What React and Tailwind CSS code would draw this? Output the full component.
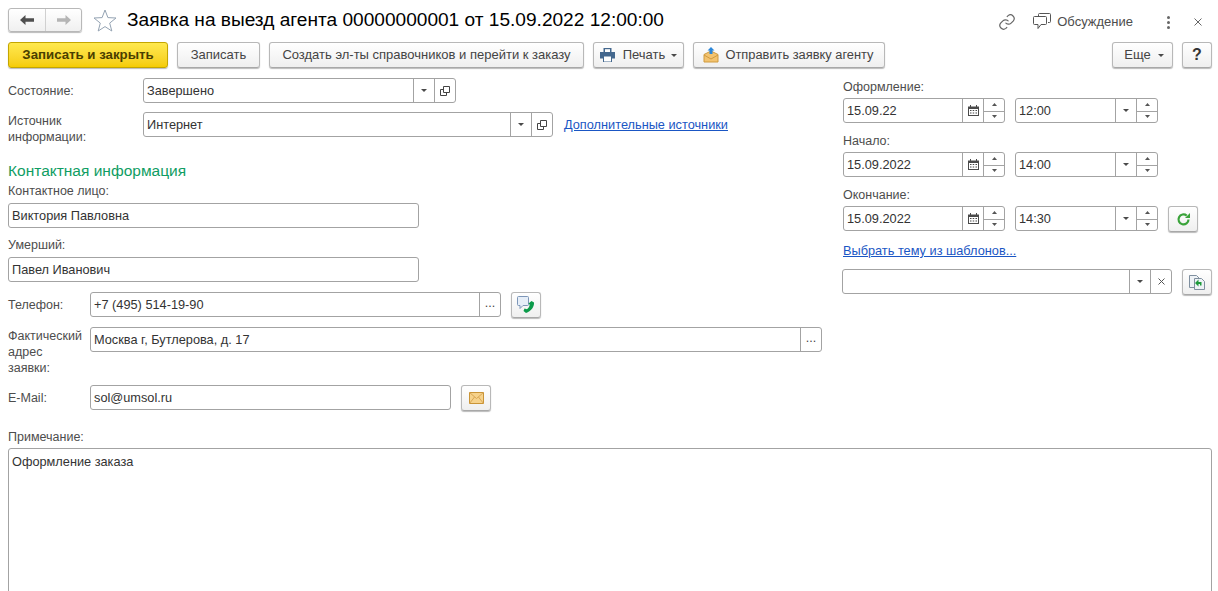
import React from "react";

const Caret = ({ className = "" }) => (
  <svg width="6" height="3" viewBox="0 0 6 3" className={className}>
    <path d="M0 0h6L3 3z" fill="#4a4a4a" />
  </svg>
);

const Calendar = () => (
  <svg width="11" height="11" viewBox="0 0 11 11">
    <path d="M0 1.500h11V11H0z" fill="#4a4a4a" />
    <path d="M2 0h1v2H2zM8 0h1v2H8z" fill="#4a4a4a" />
    <path d="M1 4h9v6H1z" fill="#fff" />
    <path d="M2 5h1.500v1H2zM4.700 5h1.500v1H4.700zM7.500 5H9v1H7.500zM2 7.500h1.500v1H2zM4.700 7.500h1.500v1H4.700zM7.500 7.500H9v1H7.500z" fill="#4a4a4a" />
  </svg>
);

const OpenIcon = () => (
  <svg width="10" height="10" viewBox="0 0 10 10" fill="none" stroke="#444" strokeWidth="1">
    <path d="M3.500 .5h6v6h-6z" />
    <path d="M3.500 3.500H.5v6h6V7" />
  </svg>
);

// маленькая кнопка справа в поле ввода
const Cell = ({ children }) => (
  <div className="w-[21px] shrink-0 h-full border-l border-[#a3a3a3] flex items-center justify-center">
    {children}
  </div>
);

const Spin = () => (
  <div className="w-[21px] shrink-0 h-full border-l border-[#a3a3a3] flex flex-col">
    <div className="h-1/2 flex items-center justify-center">
      <svg width="5" height="3" viewBox="0 0 5 3"><path d="M0 3h5L2.500 0z" fill="#555" /></svg>
    </div>
    <div className="h-1/2 border-t border-[#a3a3a3] flex items-center justify-center">
      <svg width="5" height="3" viewBox="0 0 5 3"><path d="M0 0h5L2.500 3z" fill="#555" /></svg>
    </div>
  </div>
);

const Field = ({ value, className = "", children }) => (
  <div className={`h-[25px] flex items-stretch border border-[#a3a3a3] rounded-[3px] bg-white ${className}`}>
    <div className="flex-1 min-w-0 pl-[3px] leading-[23px] text-[12.75px] text-[#333]">{value}</div>
    {children}
  </div>
);

const Btn = ({ children, className = "" }) => (
  <button className={`h-[26px] shrink-0 flex items-center justify-center border border-[#b8b8b8] border-b-[#a8a8a8] rounded-[3px] bg-gradient-to-b from-white to-[#efefef] shadow-[0_1px_1px_#bbb] text-[13px] text-[#444] ${className}`}>
    {children}
  </button>
);

const IconBtn = ({ children }) => <Btn className="w-[30px]">{children}</Btn>;

const Label = ({ children, className = "" }) => (
  <div className={`text-[#4d4d4d] leading-[16px] ${className}`}>{children}</div>
);

const DateRow = ({ date, time, children }) => (
  <div className="flex gap-[10px] h-[25px]">
    <Field value={date} className="w-[162px]">
      <Cell><Calendar /></Cell>
      <Spin />
    </Field>
    <Field value={time} className="w-[143px]">
      <Cell><Caret /></Cell>
      <Spin />
    </Field>
    {children}
  </div>
);

export default function App() {
  return (
    <div className="w-[1218px] h-[591px] overflow-hidden bg-white text-[12.5px] font-['Liberation_Sans',Arial,sans-serif]">
      {/* Заголовок */}
      <div className="h-[42px] pt-[8px] pl-[8px] pr-[16px] flex items-start">
        <div className="w-[74px] h-[24px] flex border border-[#b8b8b8] rounded-[3px] bg-gradient-to-b from-white to-[#f0f0f0] shadow-[0_1px_1px_#bbb]">
          <div className="w-[37px] flex items-center justify-center border-r border-[#d0d0d0]">
            <svg width="14" height="10" viewBox="0 0 14 10"><path d="M0 5 5.500 0v3.300H14v3.400H5.500V10z" fill="#4f4f4f" /></svg>
          </div>
          <div className="flex-1 flex items-center justify-center">
            <svg width="14" height="10" viewBox="0 0 14 10"><path d="M14 5 8.500 0v3.300H0v3.400h8.500V10z" fill="#b5b5b5" /></svg>
          </div>
        </div>
        <svg width="24" height="23" viewBox="0 0 24 23" className="ml-[11px] mt-[1px]">
          <path d="M12 1l2.900 7.600 8.100.4-6.300 5.100 2.100 7.900L12 17.600l-6.800 4.400 2.100-7.900L1 9l8.100-.4z" fill="#fff" stroke="#94a3b3" strokeWidth="1" />
        </svg>
        <div className="ml-[10px] text-[19.1px] leading-[24px] text-black">Заявка на выезд агента 00000000001 от 15.09.2022 12:00:00</div>
        <div className="flex-1" />
        <svg width="18" height="18" viewBox="0 0 24 24" fill="none" stroke="#666" strokeWidth="1.600" className="mt-[5px]">
          <path d="M10 13a5 5 0 0 0 7.500.5l3-3a5 5 0 0 0-7-7l-1.700 1.700" />
          <path d="M14 11a5 5 0 0 0-7.500-.5l-3 3a5 5 0 0 0 7 7l1.700-1.700" />
        </svg>
        <svg width="18" height="17" viewBox="0 0 18 17" fill="none" stroke="#555" strokeWidth="1" className="ml-[17px] mt-[5px]">
          <path d="M5.500 3.500v-2a1 1 0 0 1 1-1h10a1 1 0 0 1 1 1v7a1 1 0 0 1-1 1H15" />
          <path d="M1.500 3.500h11a1 1 0 0 1 1 1v6a1 1 0 0 1-1 1H8l-3 4v-4H1.500a1 1 0 0 1-1-1v-6a1 1 0 0 1 1-1z" fill="#fff" />
        </svg>
        <div className="ml-[6px] pt-[1px] leading-[26px] text-[13px] text-[#4d4d4d]">Обсуждение</div>
        <div className="ml-[34px] mt-[8px] flex flex-col gap-[2px]">
          <div className="w-[3px] h-[3px] rounded-full bg-[#666]" />
          <div className="w-[3px] h-[3px] rounded-full bg-[#666]" />
          <div className="w-[3px] h-[3px] rounded-full bg-[#666]" />
        </div>
        <svg width="8" height="8" viewBox="0 0 8 8" stroke="#666" strokeWidth="1" className="ml-[24px] mt-[10px]">
          <path d="M.5.5l7 7M7.500.5l-7 7" />
        </svg>
      </div>

      {/* Панель команд */}
      <div className="h-[36px] pr-[6px] pl-[8px] flex items-start gap-[9px]">
        <button className="h-[26px] w-[160px] shrink-0 border border-[#c4a600] rounded-[3px] bg-gradient-to-b from-[#ffe94d] to-[#f5cc00] shadow-[0_1px_1px_#bbb] font-bold text-[13.25px] text-[#4a3f00]">
          Записать и закрыть
        </button>
        <Btn className="w-[83px]">Записать</Btn>
        <Btn className="w-[315px]">Создать эл-ты справочников и перейти к заказу</Btn>
        <Btn className="w-[91px]">
          <svg width="15" height="14" viewBox="0 0 15 14" className="mr-[8px]">
            <path d="M3.500 0h8v4h-8z" fill="#44688e" />
            <path d="M0 4h15v6.500H0z" fill="#44688e" />
            <path d="M3.500 8h8v6h-8z" fill="#fff" stroke="#44688e" />
            <path d="M5 1.200h5v2.800H5z" fill="#fff" />
          </svg>
          Печать
          <Caret className="ml-[6px]" />
        </Btn>
        <Btn className="w-[192px]">
          <svg width="16" height="16" viewBox="0 0 16 16" className="mr-[6px] -ml-[1px]">
            <path d="M1 7.500 8 4l7 3.500V15H1z" fill="#f3c36f" stroke="#cf9a3e" />
            <path d="M1 8l7 4 7-4" fill="none" stroke="#cf9a3e" />
            <path d="M8 0l3.500 3.500H9.500V7h-3V3.500H4.500z" fill="#2b86d9" />
          </svg>
          <span className="text-[12.85px]">Отправить заявку агенту</span>
        </Btn>
        <div className="flex-1" />
        <Btn className="w-[61px]">
          <span className="ml-[3px]">Еще</span>
          <Caret className="ml-[7px]" />
        </Btn>
        <Btn className="w-[30px] font-bold">
          <span className="text-[16px] text-[#333]">?</span>
        </Btn>
      </div>

      {/* Форма */}
      <div className="flex">
        <div className="w-[843px] shrink-0 pl-[8px]">
          <div className="flex items-center">
            <Label className="w-[135px]">Состояние:</Label>
            <Field value="Завершено" className="w-[313px]">
              <Cell><Caret /></Cell>
              <Cell><OpenIcon /></Cell>
            </Field>
          </div>
          <div className="mt-[9px] h-[25px] flex items-start">
            <Label className="w-[135px] pt-[1px]">Источник<br />информации:</Label>
            <Field value="Интернет" className="w-[410px]">
              <Cell><Caret /></Cell>
              <Cell><OpenIcon /></Cell>
            </Field>
            <a className="ml-[11px] leading-[25px] text-[12.75px] underline text-[#1a56c4]">Дополнительные источники</a>
          </div>

          <div className="mt-[24px] text-[15.5px] leading-[19px] text-[#0f9d63]">Контактная информация</div>
          <Label className="mt-[3px]">Контактное лицо:</Label>
          <Field value="Виктория Павловна" className="w-[411px] mt-[4px]" />
          <Label className="mt-[9px]">Умерший:</Label>
          <Field value="Павел Иванович" className="w-[411px] mt-[4px]" />

          <div className="mt-[10px] h-[25px] flex items-center">
            <Label className="w-[82px]">Телефон:</Label>
            <Field value="+7 (495) 514-19-90" className="w-[411px]">
              <Cell><span className="text-[#444] leading-none -mt-[2px]">...</span></Cell>
            </Field>
            <Btn className="w-[30px] ml-[10px]">
              <svg width="18" height="18" viewBox="0 0 18 18">
                <path d="M1.500 .5h9a1 1 0 0 1 1 1v7a1 1 0 0 1-1 1H6l-3 3v-3H1.500a1 1 0 0 1-1-1v-7a1 1 0 0 1 1-1z" fill="#e6eef8" stroke="#7d96b8" />
                <path d="M14.500 5l2.500 1.500c.5 4-3 9-8 10.500L6.500 15l1-2.500 2.500.8c1.500-1 2.500-2.800 2.700-4.500L11.500 7.500z" fill="#0c9b4b" />
              </svg>
            </Btn>
          </div>

          <div className="mt-[10px] h-[47px] flex items-start">
            <Label className="w-[82px] pt-[1px]">Фактический<br />адрес<br />заявки:</Label>
            <Field value="Москва г, Бутлерова, д. 17" className="w-[732px]">
              <Cell><span className="text-[#444] leading-none -mt-[2px]">...</span></Cell>
            </Field>
          </div>

          <div className="mt-[11px] h-[25px] flex items-center">
            <Label className="w-[82px]">E-Mail:</Label>
            <Field value="sol@umsol.ru" className="w-[361px]" />
            <Btn className="w-[30px] ml-[10px]">
              <svg width="15" height="12" viewBox="0 0 15 12">
                <path d="M.5.5h14v11H.5z" fill="#f6d28b" stroke="#c99437" />
                <path d="M.5.5 7.500 6.500l7-6M.5 11.500l5-6.500M14.500 11.500l-5-6.500" fill="none" stroke="#d8a654" />
              </svg>
            </Btn>
          </div>
        </div>

        <div className="flex-1">
          <Label className="mt-[1px]">Оформление:</Label>
          <div className="mt-[3px]"><DateRow date="15.09.22" time="12:00" /></div>
          <Label className="mt-[10px]">Начало:</Label>
          <div className="mt-[3px]"><DateRow date="15.09.2022" time="14:00" /></div>
          <Label className="mt-[10px]">Окончание:</Label>
          <div className="mt-[3px]">
            <DateRow date="15.09.2022" time="14:30">
              <IconBtn>
                <svg width="15" height="15" viewBox="0 0 15 15" fill="none">
                  <path d="M12.500 7.500a5 5 0 1 1-1.800-3.900" stroke="#3aa33a" strokeWidth="2.200" />
                  <path d="M9 6h5V1z" fill="#3aa33a" />
                </svg>
              </IconBtn>
            </DateRow>
          </div>
          <a className="mt-[12px] block leading-[15px] text-[12.75px] underline text-[#1a56c4]">Выбрать тему из шаблонов...</a>
          <div className="mt-[11px] -ml-[1px] flex gap-[10px]">
            <Field value="" className="w-[330px]">
              <Cell><Caret /></Cell>
              <Cell>
                <svg width="7" height="7" viewBox="0 0 7 7" stroke="#555"><path d="M.5.5l6 6M6.500.5l-6 6" /></svg>
              </Cell>
            </Field>
            <IconBtn>
              <svg width="16" height="15" viewBox="0 0 16 15">
                <path d="M.5.5h7l3 3v9H.5z" fill="#eef2f6" stroke="#7f8f9f" />
                <path d="M5.500 3.500h7l3 3v8h-10z" fill="#eef2f6" stroke="#7f8f9f" />
                <path d="M6 8l3.500-3.500V7h3v3.500H11V9H9.500v2.500z" fill="#1e9a3c" />
              </svg>
            </IconBtn>
          </div>
        </div>
      </div>

      {/* Примечание */}
      <div className="pr-[6px] pl-[8px]">
        <Label className="mt-[19px]">Примечание:</Label>
        <div className="mt-[3px] h-[200px] border border-[#a3a3a3] rounded-[3px] pl-[3px] pt-[5px] leading-[15px] text-[12.75px] text-[#333]">
          Оформление заказа
        </div>
      </div>
    </div>
  );
}
